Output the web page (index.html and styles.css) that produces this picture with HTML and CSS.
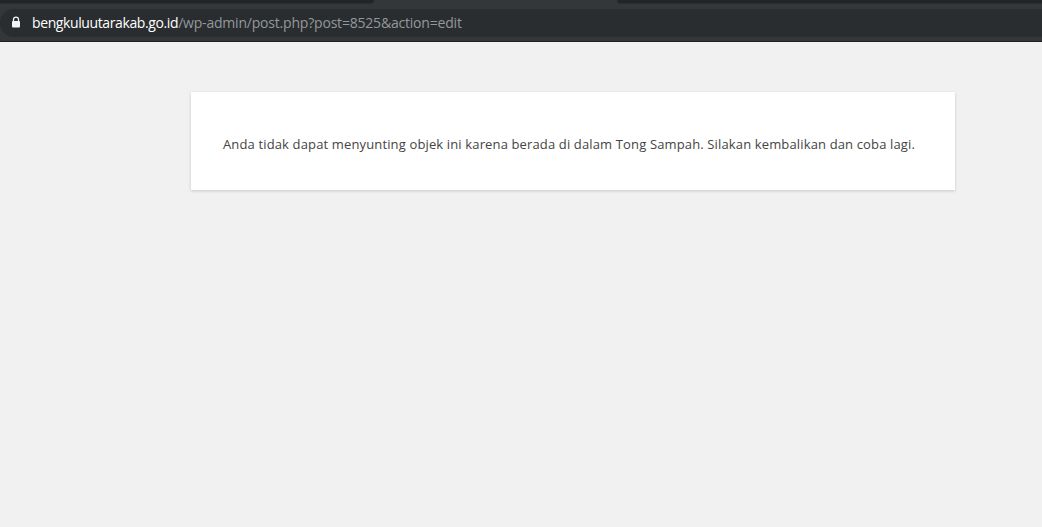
FILE: index.html
```
<!DOCTYPE html>
<html lang="id">
<head>
<meta charset="utf-8">
<title>Error</title>
<link rel="stylesheet" href="styles.css">
</head>
<body>
<header class="toolbar">
  <div class="tabs">
    <div class="tab tab-left"></div>
    <div class="tab tab-right"></div>
  </div>
  <div class="omnibox">
    <svg class="lock" width="10" height="12" viewBox="0 0 10 12" aria-hidden="true">
      <path d="M2.5 5.5V3.6a2.5 2.5 0 0 1 5 0v1.9" fill="none" stroke="#f1f3f4" stroke-width="1.3"/>
      <rect x="1" y="5" width="8" height="6.5" rx="1" fill="#f1f3f4"/>
    </svg>
    <span class="url"><span class="host">bengkuluutarakab.go.id</span><span class="path">/wp-admin/post.php?post=8525&amp;action=edit</span></span>
  </div>
</header>
<main class="page">
  <div class="message">
    <p>Anda tidak dapat menyunting objek ini karena berada di dalam Tong Sampah. Silakan kembalikan dan coba lagi.</p>
  </div>
</main>
</body>
</html>
```
FILE: styles.css
```
* { box-sizing: border-box; }
html, body { margin: 0; height: 100%; }
body {
  background: #f1f1f1;
  color: #444;
  font-family: "Open Sans", "Noto Sans", sans-serif;
  overflow: hidden;
}
.toolbar {
  height: 42px;
  background: #33373a;
  border-bottom: 1px solid #1d2022;
  display: flex;
  flex-direction: column;
}
.tabs {
  display: flex;
  justify-content: space-between;
  height: 9px;
}
.tab {
  height: 4px;
  background: #212528;
  border-bottom: 1px solid #2a2e31;
}
.tab-left { width: 374px; border-bottom-right-radius: 5px; }
.tab-right { width: 425px; border-bottom-left-radius: 5px; }
.omnibox {
  height: 28px;
  background: #292d30;
  border-radius: 14px 0 0 14px;
  display: flex;
  align-items: center;
  padding: 0 0 2px 11px;
  gap: 11px;
}
.lock { flex: none; }
.url { font-size: 14px; white-space: nowrap; }
.host { color: #fff; letter-spacing: -0.39px; }
.path { color: #94989b; letter-spacing: -0.2px; }
.page {
  padding: 50px 87px 0 191px;
}
.message {
  background: #fff;
  height: 98px;
  padding: 5px 32px 0;
  display: flex;
  align-items: center;
  box-shadow: 0 1px 3px rgba(0, 0, 0, 0.17);
}
.message p {
  margin: 0;
  font-size: 13px;
  line-height: 20px;
  letter-spacing: 0.14px;
  white-space: nowrap;
}
```
